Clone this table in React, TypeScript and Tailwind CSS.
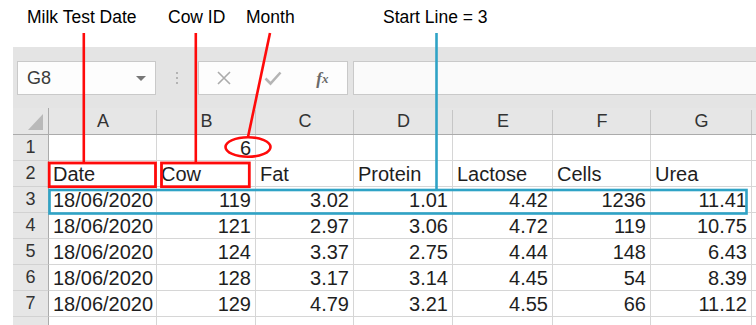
import { Fragment } from 'react';

// COLUMN LETTERS AND WIDTHS
const columns = ['A', 'B', 'C', 'D', 'E', 'F', 'G'];

type Cell = {
  value: string;
  align?: 'left' | 'right';
};

// SHEET ROWS
const rows: Cell[][] = [
  [
    { value: '' },
    { value: '6', align: 'right' },
    { value: '' },
    { value: '' },
    { value: '' },
    { value: '' },
    { value: '' },
  ],
  ['Date', 'Cow', 'Fat', 'Protein', 'Lactose', 'Cells', 'Urea'].map(
    (value) => ({ value, align: 'left' as const })
  ),
  ...[
    ['18/06/2020', '119', '3.02', '1.01', '4.42', '1236', '11.41'],
    ['18/06/2020', '121', '2.97', '3.06', '4.72', '119', '10.75'],
    ['18/06/2020', '124', '3.37', '2.75', '4.44', '148', '6.43'],
    ['18/06/2020', '128', '3.17', '3.14', '4.45', '54', '8.39'],
    ['18/06/2020', '129', '4.79', '3.21', '4.55', '66', '11.12'],
  ].map((row) =>
    row.map((value, index) => ({
      value,
      align: index === 0 ? ('left' as const) : ('right' as const),
    }))
  ),
  columns.map(() => ({ value: '' })),
];

const Toolbar = () => {
  return (
    <section className="h-[61px] bg-[#e4e4e4] flex items-start pt-[14px] pl-[4px]">
      {/* NAME BOX */}
      <div className="w-[139px] h-[34px] bg-[#fdfdfd] border border-[#c9c9c9] flex items-center justify-between pl-[9px] pr-[9px]">
        <span className="text-[18px] text-[#3b3b3b] leading-none">G8</span>
        <span className="w-0 h-0 border-l-[5px] border-r-[5px] border-t-[5px] border-l-transparent border-r-transparent border-t-[#777]" />
      </div>
      {/* GRIP DOTS */}
      <div className="w-[42px] h-[34px] flex flex-col items-center justify-center gap-[3px]">
        <span className="w-[2px] h-[2px] bg-[#b3b3b3]" />
        <span className="w-[2px] h-[2px] bg-[#b3b3b3]" />
        <span className="w-[2px] h-[2px] bg-[#b3b3b3]" />
      </div>
      {/* CANCEL / ENTER / FUNCTION */}
      <div className="w-[150px] h-[34px] bg-[#fdfdfd] border border-[#c9c9c9] grid grid-cols-3">
        <span className="flex items-center justify-center">
          <svg width="16" height="16" viewBox="0 0 16 16">
            <path d="M2 2 L14 14 M14 2 L2 14" stroke="#ababab" strokeWidth="1.6" fill="none" />
          </svg>
        </span>
        <span className="flex items-center justify-center">
          <svg width="18" height="16" viewBox="0 0 18 16">
            <path d="M1.5 8.5 L6.5 13.5 L16.5 2.5" stroke="#b5b5b5" strokeWidth="2.6" fill="none" />
          </svg>
        </span>
        <span className="flex items-center justify-center font-['Liberation_Serif',serif] italic font-bold text-[17px] text-[#6a6a6a] leading-none">
          f<span className="text-[13px]">x</span>
        </span>
      </div>
      {/* FORMULA INPUT */}
      <div className="flex-1 h-[34px] ml-[5px] bg-[#fafafa] border-y border-l border-[#c9c9c9]" />
    </section>
  );
};

const Sheet = () => {
  return (
    <section className="grid grid-cols-[36px_108px_99px_98px_99px_100px_98px_101px_1fr] grid-rows-[27px_repeat(7,26px)_26px]">
      {/* COLUMN HEADERS */}
      <div className="bg-[#e6e6e6] border-r border-b border-[#ababab] relative">
        <span className="absolute right-[5px] bottom-[4px] w-0 h-0 border-l-[15px] border-t-[16px] border-l-transparent border-t-transparent border-b-0 border-r-0 [border-bottom:16px_solid_#b9b9b9] [border-left:15px_solid_transparent] [border-top:0]" />
      </div>
      {columns.map((letter) => (
        <div
          key={letter}
          className="bg-[#e6e6e6] border-b border-[#ababab] flex items-center justify-center text-[18px] text-[#333] relative"
        >
          {letter}
          <span className="absolute right-0 top-[2px] bottom-0 w-px bg-[#c6c6c6]" />
        </div>
      ))}
      <div className="bg-[#e6e6e6] border-b border-[#ababab]" />

      {/* ROWS */}
      {rows.map((row, rowIndex) => (
        <Fragment key={rowIndex}>
          <div className="bg-[#e6e6e6] border-r border-[#ababab] border-b-[#d2d2d2] border-b flex items-center justify-center text-[18px] text-[#333]">
            {rowIndex < 7 ? rowIndex + 1 : ''}
          </div>
          {row.map((cell, cellIndex) => (
            <div
              key={cellIndex}
              className={`bg-white border-r border-b border-[#d6d6d6] flex items-center px-[4px] text-[20px] text-[#1e1e1e] leading-none whitespace-nowrap ${
                cell.align === 'right' ? 'justify-end' : 'justify-start'
              }`}
            >
              {cell.value}
            </div>
          ))}
          <div className="bg-white border-b border-[#d6d6d6]" />
        </Fragment>
      ))}
    </section>
  );
};

// CALLOUT LABELS AND MARKERS DRAWN OVER THE SHEET
const Callouts = () => {
  const red = '#ff0a0a';
  const blue = '#2fa3c6';
  return (
    <>
      <span className="absolute left-[27px] top-[7px] text-[17.5px] leading-[20px] text-black">
        Milk Test Date
      </span>
      <span className="absolute left-[168px] top-[7px] text-[17.5px] leading-[20px] text-black">
        Cow ID
      </span>
      <span className="absolute left-[246px] top-[7px] text-[17.5px] leading-[20px] text-black">
        Month
      </span>
      <span className="absolute left-[383px] top-[7px] text-[17.5px] leading-[20px] text-black">
        Start Line = 3
      </span>
      <svg
        className="absolute inset-0 pointer-events-none"
        width="756"
        height="325"
        viewBox="0 0 756 325"
      >
        <line x1="83.8" y1="33" x2="83.8" y2="162" stroke={red} strokeWidth="2.6" />
        <line x1="195.8" y1="33" x2="195.8" y2="162" stroke={red} strokeWidth="2.6" />
        <line x1="270" y1="33" x2="248" y2="137" stroke={red} strokeWidth="2.6" />
        <ellipse cx="248" cy="147" rx="22.5" ry="9.8" fill="none" stroke={red} strokeWidth="2.6" />
        <rect x="49.2" y="163" width="106.3" height="23.7" fill="none" stroke={red} strokeWidth="2.8" />
        <rect x="161.5" y="163" width="87.8" height="23.7" fill="none" stroke={red} strokeWidth="2.8" />
        <line x1="436.5" y1="33" x2="436.5" y2="189" stroke={blue} strokeWidth="2.6" />
        <rect x="49.5" y="190" width="697" height="23.5" fill="none" stroke={blue} strokeWidth="2.6" />
      </svg>
    </>
  );
};

const App = () => {
  return (
    <main className="w-[756px] h-[325px] bg-white relative overflow-hidden font-['Liberation_Sans',Arial,sans-serif]">
      <div className="pt-[47px] pl-[13px]">
        <Toolbar />
        <Sheet />
      </div>
      <Callouts />
    </main>
  );
};

export default App;
